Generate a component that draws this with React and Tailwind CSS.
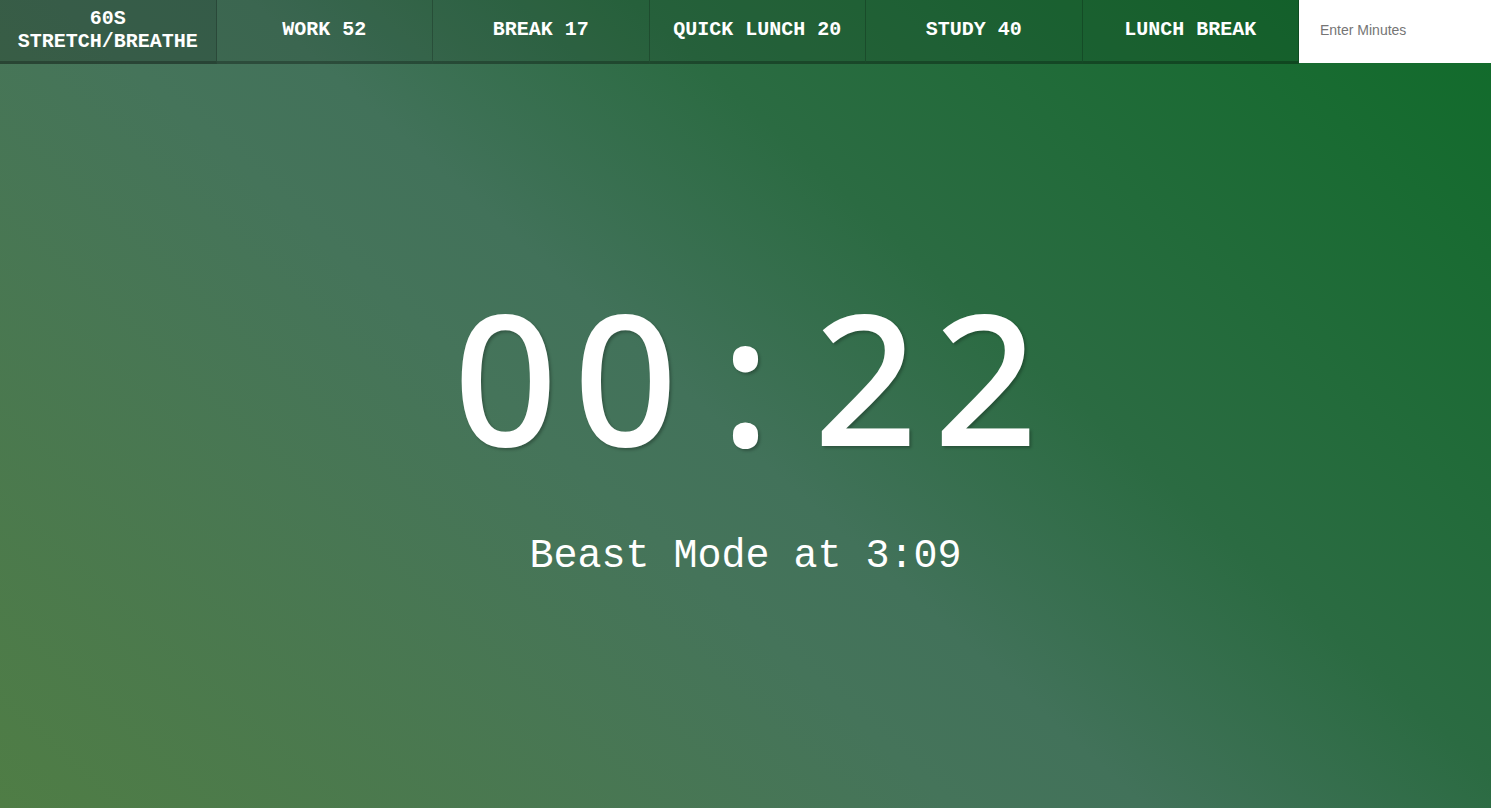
import { useState } from 'react';

const presets = [
  { label: '60s Stretch/Breathe', minutes: 1 },
  { label: 'Work 52', minutes: 52 },
  { label: 'Break 17', minutes: 17 },
  { label: 'Quick Lunch 20', minutes: 20 },
  { label: 'Study 40', minutes: 40 },
  { label: 'Lunch Break', minutes: 45 },
];

export default function App() {
  const [minutes, setMinutes] = useState('');
  const time = '00:22';

  return (
    <div className="min-h-screen h-[808px] flex flex-col bg-[linear-gradient(42deg,#4f7d45_0%,#45745a_40%,#42725a_48%,#2b6b42_64%,#106b2a_100%)] text-white">
      {/* Preset bar */}
      <nav className="flex h-[64px] shrink-0">
        {presets.map((p) => (
          <button
            key={p.label}
            className="flex-1 h-[64px] px-2 pb-[2px] flex items-center justify-center text-center uppercase font-bold text-[20px] leading-[23px] bg-black/10 border-r border-black/20 border-b-[3px] border-b-black/25 font-['Liberation_Mono','Courier_New',monospace] hover:bg-black/20"
          >
            {p.label}
          </button>
        ))}
        <input
          type="text"
          value={minutes}
          onChange={(e) => setMinutes(e.target.value)}
          placeholder="Enter Minutes"
          className="w-[192px] h-[63px] bg-white text-black pl-[21px] pb-[4px] text-[14px] placeholder:text-[#757575] outline-none font-['Liberation_Sans',Arial,sans-serif]"
        />
      </nav>

      {/* Timer */}
      <main className="flex-1 flex flex-col items-center justify-center pb-[8px]">
        <div className="flex text-[182px] leading-[180px] font-medium font-['Noto_Sans',sans-serif] [text-shadow:2px_2px_3px_rgba(0,0,0,0.25)]">
          {time.split('').map((ch, i) => (
            <span key={i} className="inline-block w-[120px] text-center">
              {ch}
            </span>
          ))}
        </div>
        <div className="mt-[69px] text-[40px] leading-[45px] font-['Liberation_Mono','Courier_New',monospace]">
          Beast Mode at 3:09
        </div>
      </main>
    </div>
  );
}
